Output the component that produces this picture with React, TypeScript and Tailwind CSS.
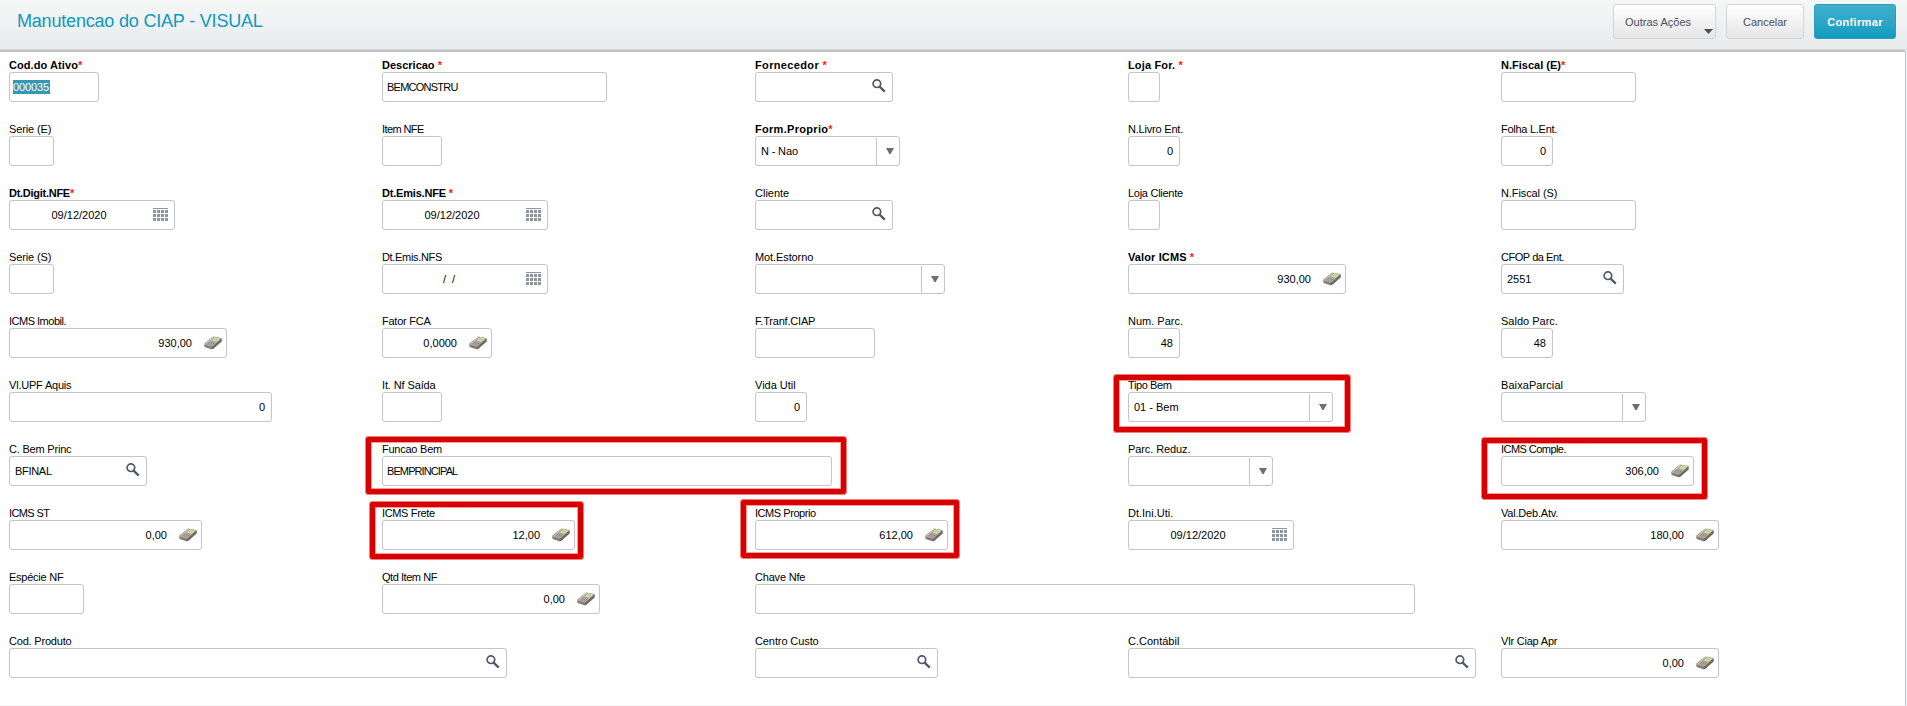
import type { ReactNode } from "react";

type Kind = "text" | "date" | "search" | "select" | "money" | "number";

interface Field {
  label: string;
  kind?: Kind;
  value?: string;
  width: string;
  required?: boolean;
  spaced?: boolean;
  selected?: boolean;
  tracking?: string;
  valueTracking?: string;
  highlight?: string;
}

const rows: (Field | null)[][] = [
  [
    { label: "Cod.do Ativo", value: "000035", width: "w-[90px]", required: true, selected: true, tracking: "tracking-[0.08px]" },
    {
      label: "Descricao",
      value: "BEMCONSTRU",
      width: "w-[225px]",
      required: true,
      spaced: true,
      valueTracking: "tracking-[-0.75px]",
    },
    { label: "Fornecedor", kind: "search", width: "w-[138px]", required: true, spaced: true, tracking: "tracking-[0.35px]" },
    { label: "Loja For.", width: "w-8", required: true, spaced: true, tracking: "tracking-[0.15px]" },
    { label: "N.Fiscal (E)", width: "w-[135px]", required: true },
  ],
  [
    { label: "Serie (E)", width: "w-[45px]", tracking: "tracking-[-0.12px]" },
    { label: "Item NFE", width: "w-[60px]", tracking: "tracking-[-0.6px]" },
    {
      label: "Form.Proprio",
      kind: "select",
      value: "N - Nao",
      width: "w-[145px]",
      required: true,
      tracking: "tracking-[0.3px]",
      valueTracking: "tracking-[-0.15px]",
    },
    { label: "N.Livro Ent.", kind: "number", value: "0", width: "w-[52px]", tracking: "tracking-[-0.2px]" },
    { label: "Folha L.Ent.", kind: "number", value: "0", width: "w-[52px]", tracking: "tracking-[-0.27px]" },
  ],
  [
    { label: "Dt.Digit.NFE", kind: "date", value: "09/12/2020", width: "w-[166px]", required: true, tracking: "tracking-[-0.27px]" },
    {
      label: "Dt.Emis.NFE",
      kind: "date",
      value: "09/12/2020",
      width: "w-[166px]",
      required: true,
      spaced: true,
      tracking: "tracking-[-0.2px]",
    },
    { label: "Cliente", kind: "search", width: "w-[138px]" },
    { label: "Loja Cliente", width: "w-8", tracking: "tracking-[-0.27px]" },
    { label: "N.Fiscal (S)", width: "w-[135px]", tracking: "tracking-[-0.1px]" },
  ],
  [
    { label: "Serie (S)", width: "w-[45px]", tracking: "tracking-[-0.12px]" },
    { label: "Dt.Emis.NFS", kind: "date", value: "/  /", width: "w-[166px]", tracking: "tracking-[-0.33px]" },
    { label: "Mot.Estorno", kind: "select", width: "w-[190px]", tracking: "tracking-[-0.1px]" },
    {
      label: "Valor ICMS",
      kind: "money",
      value: "930,00",
      width: "w-[218px]",
      required: true,
      spaced: true,
      tracking: "tracking-[0.12px]",
    },
    { label: "CFOP da Ent.", kind: "search", value: "2551", width: "w-[123px]", tracking: "tracking-[-0.45px]" },
  ],
  [
    { label: "ICMS Imobil.", kind: "money", value: "930,00", width: "w-[218px]", tracking: "tracking-[-0.5px]" },
    { label: "Fator FCA", kind: "money", value: "0,0000", width: "w-[110px]", tracking: "tracking-[-0.25px]" },
    { label: "F.Tranf.CIAP", width: "w-[120px]", tracking: "tracking-[-0.2px]" },
    { label: "Num. Parc.", kind: "number", value: "48", width: "w-[52px]" },
    { label: "Saldo Parc.", kind: "number", value: "48", width: "w-[52px]" },
  ],
  [
    { label: "Vl.UPF Aquis", kind: "number", value: "0", width: "w-[263px]", tracking: "tracking-[-0.2px]" },
    { label: "It. Nf Saída", width: "w-[60px]", tracking: "tracking-[-0.12px]" },
    { label: "Vida Util", kind: "number", value: "0", width: "w-[52px]" },
    {
      label: "Tipo Bem",
      kind: "select",
      value: "01 - Bem",
      width: "w-[205px]",
      tracking: "tracking-[-0.4px]",
      highlight: "-left-[14px] -top-[3px] w-[236px] h-[57px]",
    },
    { label: "BaixaParcial", kind: "select", width: "w-[145px]", tracking: "tracking-[0.08px]" },
  ],
  [
    { label: "C. Bem Princ", kind: "search", value: "BFINAL", width: "w-[138px]", tracking: "tracking-[-0.2px]", valueTracking: "tracking-[-0.3px]" },
    {
      label: "Funcao Bem",
      value: "BEMPRINCIPAL",
      width: "w-[450px]",
      tracking: "tracking-[-0.24px]",
      valueTracking: "tracking-[-0.9px]",
      highlight: "-left-[16px] -top-[5px] w-[480px] h-[57px]",
    },
    null,
    { label: "Parc. Reduz.", kind: "select", width: "w-[145px]", tracking: "tracking-[-0.1px]" },
    {
      label: "ICMS Comple.",
      kind: "money",
      value: "306,00",
      width: "w-[193px]",
      tracking: "tracking-[-0.55px]",
      highlight: "-left-[19px] -top-[4px] w-[225px] h-[61px]",
    },
  ],
  [
    { label: "ICMS ST", kind: "money", value: "0,00", width: "w-[193px]", tracking: "tracking-[-0.6px]" },
    {
      label: "ICMS Frete",
      kind: "money",
      value: "12,00",
      width: "w-[193px]",
      tracking: "tracking-[-0.35px]",
      highlight: "-left-[12px] -top-[4px] w-[213px] h-[57px]",
    },
    {
      label: "ICMS Proprio",
      kind: "money",
      value: "612,00",
      width: "w-[193px]",
      tracking: "tracking-[-0.45px]",
      highlight: "-left-[14px] -top-[6px] w-[218px] h-[58px]",
    },
    { label: "Dt.Ini.Uti.", kind: "date", value: "09/12/2020", width: "w-[166px]" },
    { label: "Val.Deb.Atv.", kind: "money", value: "180,00", width: "w-[218px]", tracking: "tracking-[-0.2px]" },
  ],
  [
    { label: "Espécie NF", width: "w-[75px]", tracking: "tracking-[-0.25px]" },
    { label: "Qtd Item NF", kind: "money", value: "0,00", width: "w-[218px]", tracking: "tracking-[-0.45px]" },
    { label: "Chave Nfe", width: "w-[660px]", tracking: "tracking-[-0.2px]" },
    null,
    null,
  ],
  [
    { label: "Cod. Produto", kind: "search", width: "w-[498px]", tracking: "tracking-[-0.2px]" },
    null,
    { label: "Centro Custo", kind: "search", width: "w-[183px]", tracking: "tracking-[-0.1px]" },
    { label: "C.Contábil", kind: "search", width: "w-[348px]" },
    { label: "Vlr Ciap Apr", kind: "money", value: "0,00", width: "w-[218px]", tracking: "tracking-[-0.2px]" },
  ],
];

function SearchIcon() {
  return (
    <svg width="14" height="14" viewBox="0 0 14 14" fill="none" className="mb-[2px] shrink-0">
      <circle cx="4.9" cy="4.7" r="3.8" stroke="#4f5969" strokeWidth="1.7" />
      <path d="M7.6 7.6 12.8 12.6" stroke="#4f5969" strokeWidth="2.3" />
    </svg>
  );
}

function CalendarIcon() {
  return (
    <svg width="15" height="14" viewBox="0 0 15 14" fill="#8d95a1" shapeRendering="crispEdges" className="shrink-0">
      <rect width="15" height="1" />
      {[2, 6, 10].map((y) =>
        [0, 4, 8, 12].map((x) => <rect key={`${x}-${y}`} x={x} y={y} width="3" height="3" />)
      )}
    </svg>
  );
}

function CalculatorIcon() {
  return (
    <svg width="18" height="14" viewBox="0 0 18 14" className="shrink-0">
      <path d="M.3 8.2Q.3 7.4 1 6.9L8.6 1Q9.3.5 10.3.7L16.8 1.9Q17.8 2.2 17.7 3.2L17.5 5.4 9.2 12.8Q8.4 13.5 7.4 13.2L1.3 11.3Q.5 11 .4 10.2Z" fill="#857e77" />
      <path d="M.3 8.4 8.6 1Q9.3.5 10.3.7L17.6 2.5 8.2 10.7Z" fill="#b3aba2" />
      <path d="M8.2 10.7 17.6 2.5 17.5 5.4 9.2 12.8 7.6 13.2Z" fill="#706963" />
      <path d="M1.6 7.8 9.4 1.2" stroke="#d6d1cb" strokeWidth="0.8" />
      <path d="M8.6 4.3 11.2 1.9 15.4 2.8 12.7 5.2Z" fill="#b4dc77" stroke="#dce8c6" strokeWidth="0.7" />
      <path d="M3.6 8.1 7.2 5.1M5.5 8.7 9.1 5.7M7.4 9.3 11 6.3" stroke="#84776f" strokeWidth="1" strokeDasharray="1.4 .7" />
    </svg>
  );
}

function Box({ field, className, children }: { field: Field; className?: string; children?: ReactNode }) {
  return (
    <div
      className={`flex h-[30px] items-center rounded-[3px] border border-[#c3c5c7] bg-white text-[11px] whitespace-pre ${field.width} ${field.valueTracking ?? ""} ${className ?? ""}`}
    >
      {children}
    </div>
  );
}

function FieldInput({ field }: { field: Field }) {
  switch (field.kind) {
    case "search":
      return (
        <Box field={field} className="justify-between pr-[6px] pl-[5px]">
          <span>{field.value}</span>
          <SearchIcon />
        </Box>
      );
    case "date":
      return (
        <Box field={field} className="justify-between pr-[6px]">
          <span className={`text-center ${field.value === "/  /" ? "w-[132px]" : "w-[138px]"}`}>{field.value}</span>
          <CalendarIcon />
        </Box>
      );
    case "money":
      return (
        <Box field={field} className="justify-end gap-3 pr-1">
          <span>{field.value}</span>
          <CalculatorIcon />
        </Box>
      );
    case "number":
      return (
        <Box field={field} className="justify-end pr-[6px]">
          {field.value}
        </Box>
      );
    case "select":
      return (
        <Box field={field} className="justify-between pl-[5px]">
          <span>{field.value}</span>
          <span className="mt-px flex h-[27px] w-[23px] items-center justify-center border-l border-[#c3c5c7] pb-px pl-[3px]">
            <svg width="8" height="6" viewBox="0 0 8 6" fill="#687080">
              <path d="M0 0H8L4.6 6H3.4Z" />
            </svg>
          </span>
        </Box>
      );
    default:
      return (
        <Box field={field} className="pl-1">
          <span className={field.selected ? "-ml-px bg-[#3399b5] pr-px leading-[14px] tracking-[-0.1px] text-white" : ""}>
            {field.value}
          </span>
        </Box>
      );
  }
}

function FormField({ field }: { field: Field }) {
  return (
    <div className="relative w-max">
      <div
        className={`h-[14px] text-[11px] leading-[14px] whitespace-pre ${field.required ? "font-bold" : ""} ${field.tracking ?? ""}`}
      >
        {field.label}
        {field.required && <span className="text-[#ff1a0a]">{field.spaced ? " *" : "*"}</span>}
      </div>
      <FieldInput field={field} />
      {field.highlight && (
        <div
          className={`absolute rounded-[2px] border-[5px] border-[#d90000] shadow-[0_0_0_1px_#ee8080,inset_0_0_0_1px_#f4a0a0] ${field.highlight}`}
        />
      )}
    </div>
  );
}

export default function App() {
  return (
    <div className="flex h-[706px] w-[1907px] flex-col overflow-hidden bg-[#f0f1f2] font-['Liberation_Sans',Arial,sans-serif] text-black">
      <header className="flex h-[49px] shrink-0 items-start justify-between bg-linear-to-b from-[#f5f7f7] to-[#e9eaec] pr-[11px] pl-[17px]">
        <h1 className="pt-[8px] text-[18px] leading-[27px] tracking-[-0.19px] text-[#0c9abe]">
          Manutencao do CIAP - VISUAL
        </h1>
        <div className="flex gap-[10px] pt-1 text-[11px] text-[#4a4f58]">
          <button className="relative h-[35px] w-[103px] rounded-[3px] border border-[#d3d5d7] bg-linear-to-b from-white to-[#e6e6e7] pt-px pl-[11px] text-left">
            Outras Ações
            <svg width="9" height="5" viewBox="0 0 9 5" fill="#4a4f5a" className="absolute right-[2px] bottom-1">
              <path d="M0 0H9L4.5 5Z" />
            </svg>
          </button>
          <button className="h-[35px] w-[78px] rounded-[3px] border border-[#d3d5d7] bg-linear-to-b from-white to-[#e6e6e7] pt-px">
            Cancelar
          </button>
          <button className="h-[35px] w-[82px] rounded-[3px] border border-[#2a9dbb] bg-linear-to-b from-[#3fb0ce] to-[#0f9cc0] pt-px font-bold tracking-[0.35px] text-white">
            Confirmar
          </button>
        </div>
      </header>
      <div className="h-px shrink-0 bg-[#d5d6d7]" />
      <main className="mr-px flex-1 rounded-tr-[3px] border-t-2 border-r border-b border-t-[#c2c2c2] border-r-[#c2c2c2] border-b-[#f4f4f4] bg-white pt-[6px] pl-[9px]">
        {rows.map((row, i) => (
          <div key={i} className="grid h-16 grid-cols-[repeat(5,373px)]">
            {row.map((field, j) => (field ? <FormField key={j} field={field} /> : <div key={j} />))}
          </div>
        ))}
      </main>
    </div>
  );
}
